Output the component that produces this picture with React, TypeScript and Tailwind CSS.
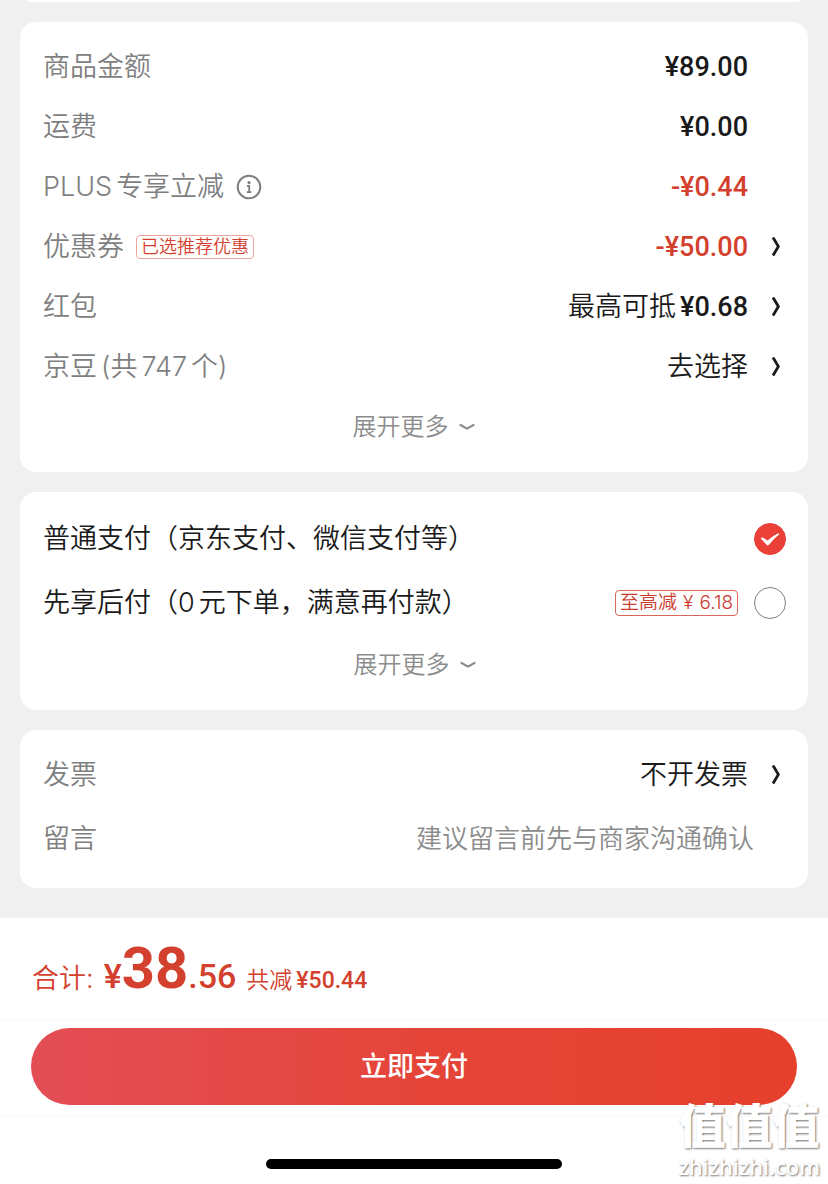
import { useState } from 'react';
import type { ReactNode } from 'react';

interface PriceRow {
  label: ReactNode;
  value: ReactNode;
  badge?: ReactNode;
  arrow?: boolean;
}

function Price({ children, red }: { children: ReactNode; red?: boolean }) {
  return (
    <span className={red ? "font-['Roboto'] font-medium text-[#d4402e]" : "font-['Roboto'] font-medium text-[#1a1a1a]"}>
      {children}
    </span>
  );
}

function InfoIcon() {
  return (
    <svg width="26" height="26" viewBox="0 0 26 26" fill="none" stroke="#7f7f7f" strokeWidth="2">
      <circle cx="13" cy="13" r="11.3" />
      <circle cx="13" cy="8.6" r="1.6" fill="#7f7f7f" stroke="none" />
      <path d="M11 12h2.2v6M10.8 18.2h4.6" strokeWidth="1.8" />
    </svg>
  );
}

function ArrowRight() {
  return (
    <svg width="36" height="20" viewBox="0 0 36 20" fill="none" stroke="#1a1a1a" strokeWidth="2.8" strokeLinejoin="round">
      <path d="M25 .5l5.4 9L25 18.500" />
    </svg>
  );
}

function ArrowDown() {
  return (
    <svg width="16" height="8" viewBox="0 0 16 8" fill="none" stroke="#8c8c8c" strokeWidth="2.2" strokeLinecap="round" strokeLinejoin="round">
      <path d="M1.5 2l6.5 3.6L14.500 2" />
    </svg>
  );
}

function MoreButton() {
  return (
    <button type="button" className="flex h-[60px] w-full items-center justify-center gap-2.5 text-2xl text-[#8c8c8c]">
      展开更多
      <ArrowDown />
    </button>
  );
}

export default function App() {
  const [payment, setPayment] = useState('normal');
  const [message, setMessage] = useState('');

  const rows: PriceRow[] = [
    { label: '商品金额', value: <Price>¥89.00</Price> },
    { label: '运费', value: <Price>¥0.00</Price> },
    {
      label: <span className="flex gap-1"><span>PLUS</span><span>专享立减</span></span>,
      badge: <button type="button" aria-label="PLUS专享立减"><InfoIcon /></button>,
      value: <Price red>-¥0.44</Price>,
    },
    {
      label: '优惠券',
      badge: (
        <span className="rounded border border-[#e9a59e] px-1 text-lg leading-[22px] text-[#d4402e]">
          已选推荐优惠
        </span>
      ),
      value: <Price red>-¥50.00</Price>,
      arrow: true,
    },
    {
      label: '红包',
      value: <span className="flex gap-1"><span>最高可抵</span><Price>¥0.68</Price></span>,
      arrow: true,
    },
    {
      label: <span className="flex gap-1"><span>京豆</span><span>(共</span><span>747</span><span>个)</span></span>,
      value: '去选择',
      arrow: true,
    },
  ];

  const payments = [
    { id: 'normal', label: <>普通支付（京东支付、微信支付等）</> },
    {
      id: 'later',
      label: <>先享后付（<span className="mr-1">0</span>元下单，满意再付款）</>,
      tag: <><span>至高减</span><span>¥</span><span>6.18</span></>,
    },
  ];

  return (
    <div className="relative min-h-screen bg-[#f0f0f0] font-['Inter','Noto_Sans_CJK_SC',sans-serif] text-[27px] leading-9 font-[350] text-[#1a1a1a]">
      <div className="mx-7 h-0.5 rounded-b-sm bg-white" />

      <main className="flex flex-col gap-5 px-5 pt-5 pb-[30px]">
        <section className="rounded-2xl bg-white py-[15px] pr-6 pl-[23px]">
          {rows.map((row, i) => (
            <div key={i} className="flex h-[60px] items-center">
              <div className="flex items-center gap-3 text-[#7f7f7f]">
                {row.label}
                {row.badge}
              </div>
              {row.arrow ? (
                <button type="button" className="ml-auto flex items-center">
                  {row.value}
                  <ArrowRight />
                </button>
              ) : (
                <div className="mr-9 ml-auto">{row.value}</div>
              )}
            </div>
          ))}
          <MoreButton />
        </section>

        <section className="rounded-2xl bg-white py-[15px] pr-[22px] pl-[23px]">
          {payments.map((item) => (
            <div key={item.id} className="flex h-16 items-center">
              <label htmlFor={item.id} className="flex-1">{item.label}</label>
              {item.tag && (
                <span className="mr-4 flex gap-1.5 rounded border border-[#d9675b] px-1 text-[19px] leading-6 text-[#c93c2e]">
                  {item.tag}
                </span>
              )}
              <span className="relative h-8 w-8">
                <input
                  id={item.id}
                  type="radio"
                  name="payment"
                  checked={payment === item.id}
                  onChange={() => setPayment(item.id)}
                  className="block h-8 w-8 appearance-none rounded-full border border-[#7f7f7f] checked:border-[#ea4038] checked:bg-[#ea4038]"
                />
                {payment === item.id && (
                  <svg className="pointer-events-none absolute inset-0" width="32" height="32" viewBox="0 0 32 32" fill="#fff">
                    <path d="M6.800 15.500q1.200-1.600 2.800-.6l4 2.600q5-4.800 10.800-7.300q1.200 0 .6 1.300q-5.500 4.400-10 10.300q-1.300 1.300-2.500 0z" />
                  </svg>
                )}
              </span>
            </div>
          ))}
          <MoreButton />
        </section>

        <section className="rounded-2xl bg-white pt-[13px] pr-6 pb-[17px] pl-[23px]">
          <div className="flex h-16 items-center">
            <span className="text-[#7f7f7f]">发票</span>
            <button type="button" className="ml-auto flex items-center">
              不开发票
              <ArrowRight />
            </button>
          </div>
          <div className="flex h-16 items-center">
            <label htmlFor="message" className="text-[#7f7f7f]">留言</label>
            <input
              id="message"
              type="text"
              value={message}
              onChange={(e) => setMessage(e.target.value)}
              placeholder="建议留言前先与商家沟通确认"
              className="min-w-0 flex-1 pr-[30px] text-right text-[26px] outline-none placeholder:text-[#8c8c8c]"
            />
          </div>
        </section>
      </main>

      <footer className="bg-white">
        <div className="flex h-[102px] items-baseline px-8 pt-3.5 text-[#d4402e]">
          <span className="mr-2.5">合计:</span>
          <span className="font-['Roboto'] text-[34px] leading-[72px] font-medium">
            ¥<span className="text-[58px] font-bold">38</span>.56
          </span>
          <span className="ml-2.5 text-[23px]">共减</span>
          <span className="ml-1 font-['Roboto'] text-[23px] font-medium">¥50.44</span>
        </div>
        <div className="border-y border-[#faf7f6] px-[31px] pt-[7px] pb-[11px]">
          <button
            type="button"
            className="h-[77px] w-full rounded-full bg-linear-to-r from-[#e34d55] via-[#e54539] to-[#e5402b] font-medium text-white"
          >
            立即支付
          </button>
        </div>
        <div className="flex justify-center pt-[42px] pb-[15px]">
          <div className="h-2.5 w-[296px] rounded-full bg-black" />
        </div>
      </footer>

      <div className="pointer-events-none absolute right-2 bottom-1 flex flex-col items-center text-white [text-shadow:1px_1px_2px_#777]">
        <span className="text-[47px] leading-[52px] font-black">值值值</span>
        <span className="font-['Noto_Sans'] text-[22px] leading-7 font-medium">zhizhizhi.com</span>
      </div>
    </div>
  );
}
